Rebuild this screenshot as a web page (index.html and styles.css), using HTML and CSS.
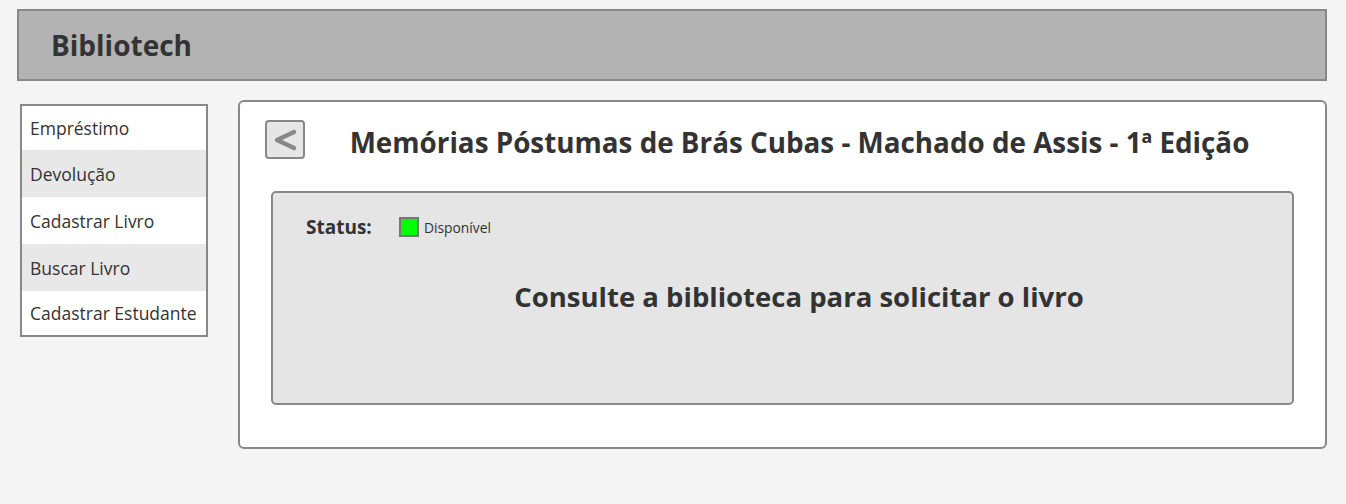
FILE: index.html
```html
<!DOCTYPE html>
<html lang="pt">
<head>
<meta charset="utf-8">
<title>Bibliotech</title>
<link rel="stylesheet" href="styles.css">
</head>
<body>
<header class="topbar">
  <h1 class="brand">Bibliotech</h1>
</header>
<div class="layout">
  <nav class="sidebar">
    <a class="nav-item">Empréstimo</a>
    <a class="nav-item alt">Devolução</a>
    <a class="nav-item">Cadastrar Livro</a>
    <a class="nav-item alt">Buscar Livro</a>
    <a class="nav-item">Cadastrar Estudante</a>
  </nav>
  <main class="panel">
    <div class="panel-head">
      <button class="back-btn" aria-label="Voltar">
        <svg width="26" height="22" viewBox="0 0 26 22"><path d="M22 3 L5 11 L22 19" fill="none" stroke="#888" stroke-width="4.5" stroke-linecap="round" stroke-linejoin="round"/></svg>
      </button>
      <h2 class="book-title">Memórias Póstumas de Brás Cubas - Machado de Assis - 1ª Edição</h2>
    </div>
    <section class="info-box">
      <div class="status-row">
        <span class="status-label">Status:</span>
        <span class="status-dot"></span>
        <span class="status-text">Disponível</span>
      </div>
      <p class="notice">Consulte a biblioteca para solicitar o livro</p>
    </section>
  </main>
</div>
</body>
</html>
```
FILE: styles.css
```css
* { box-sizing: border-box; }
body {
  margin: 0;
  background: #f4f4f4;
  font-family: "Open Sans", "Lato", sans-serif;
  color: #333;
  width: 1346px;
  height: 504px;
  overflow: hidden;
}
.topbar {
  margin: 9px 19px 0 17px;
  height: 72px;
  background: #b3b3b3;
  border: 2px solid #888;
  display: flex;
  align-items: center;
  padding-left: 32px;
}
.brand {
  margin: 0;
  font-size: 28px;
  font-weight: 700;
  color: #333;
}
.layout {
  display: flex;
  align-items: flex-start;
  gap: 30px;
  padding: 19px 19px 0 20px;
}
.sidebar {
  margin-top: 4px;
  width: 188px;
  flex: none;
  background: #fff;
  border: 2px solid #888;
  display: flex;
  flex-direction: column;
}
.nav-item {
  height: 47px;
  display: flex;
  align-items: center;
  padding-left: 8px;
  font-size: 17.5px;
  color: #333;
  background: #fff;
}
.nav-item:first-child,
.nav-item:last-child { height: 44px; }
.nav-item.alt { background: #e8e8e8; }
.panel {
  flex: 1;
  height: 349px;
  background: #fff;
  border: 2px solid #888;
  border-radius: 6px;
  padding: 18px 31px 0 31px;
}
.panel-head {
  display: flex;
  align-items: center;
  margin-left: -6px;
  height: 39px;
  margin-bottom: 32px;
}
.back-btn {
  width: 40px;
  height: 39px;
  flex: none;
  background: #e6e6e6;
  border: 2px solid #888;
  border-radius: 4px;
  padding: 0;
  display: flex;
  align-items: center;
  justify-content: center;
}
.book-title {
  flex: 1;
  margin: 0;
  padding-top: 4px;
  text-align: center;
  font-size: 27.8px;
  font-weight: 700;
  color: #333;
}
.info-box {
  height: 214px;
  background: #e5e5e5;
  border: 2px solid #888;
  border-radius: 5px;
  padding: 23px 0 0 33px;
}
.status-row {
  display: flex;
  align-items: center;
  height: 22px;
}
.status-label {
  font-size: 19px;
  font-weight: 700;
  width: 93px;
}
.status-dot {
  width: 20px;
  height: 20px;
  background: #00ff00;
  border: 2px solid #777;
  margin-right: 5px;
}
.status-text {
  font-size: 13.8px;
}
.notice {
  margin: 40px 0 0;
  text-align: center;
  font-size: 27.5px;
  font-weight: 700;
  color: #333;
}
```
